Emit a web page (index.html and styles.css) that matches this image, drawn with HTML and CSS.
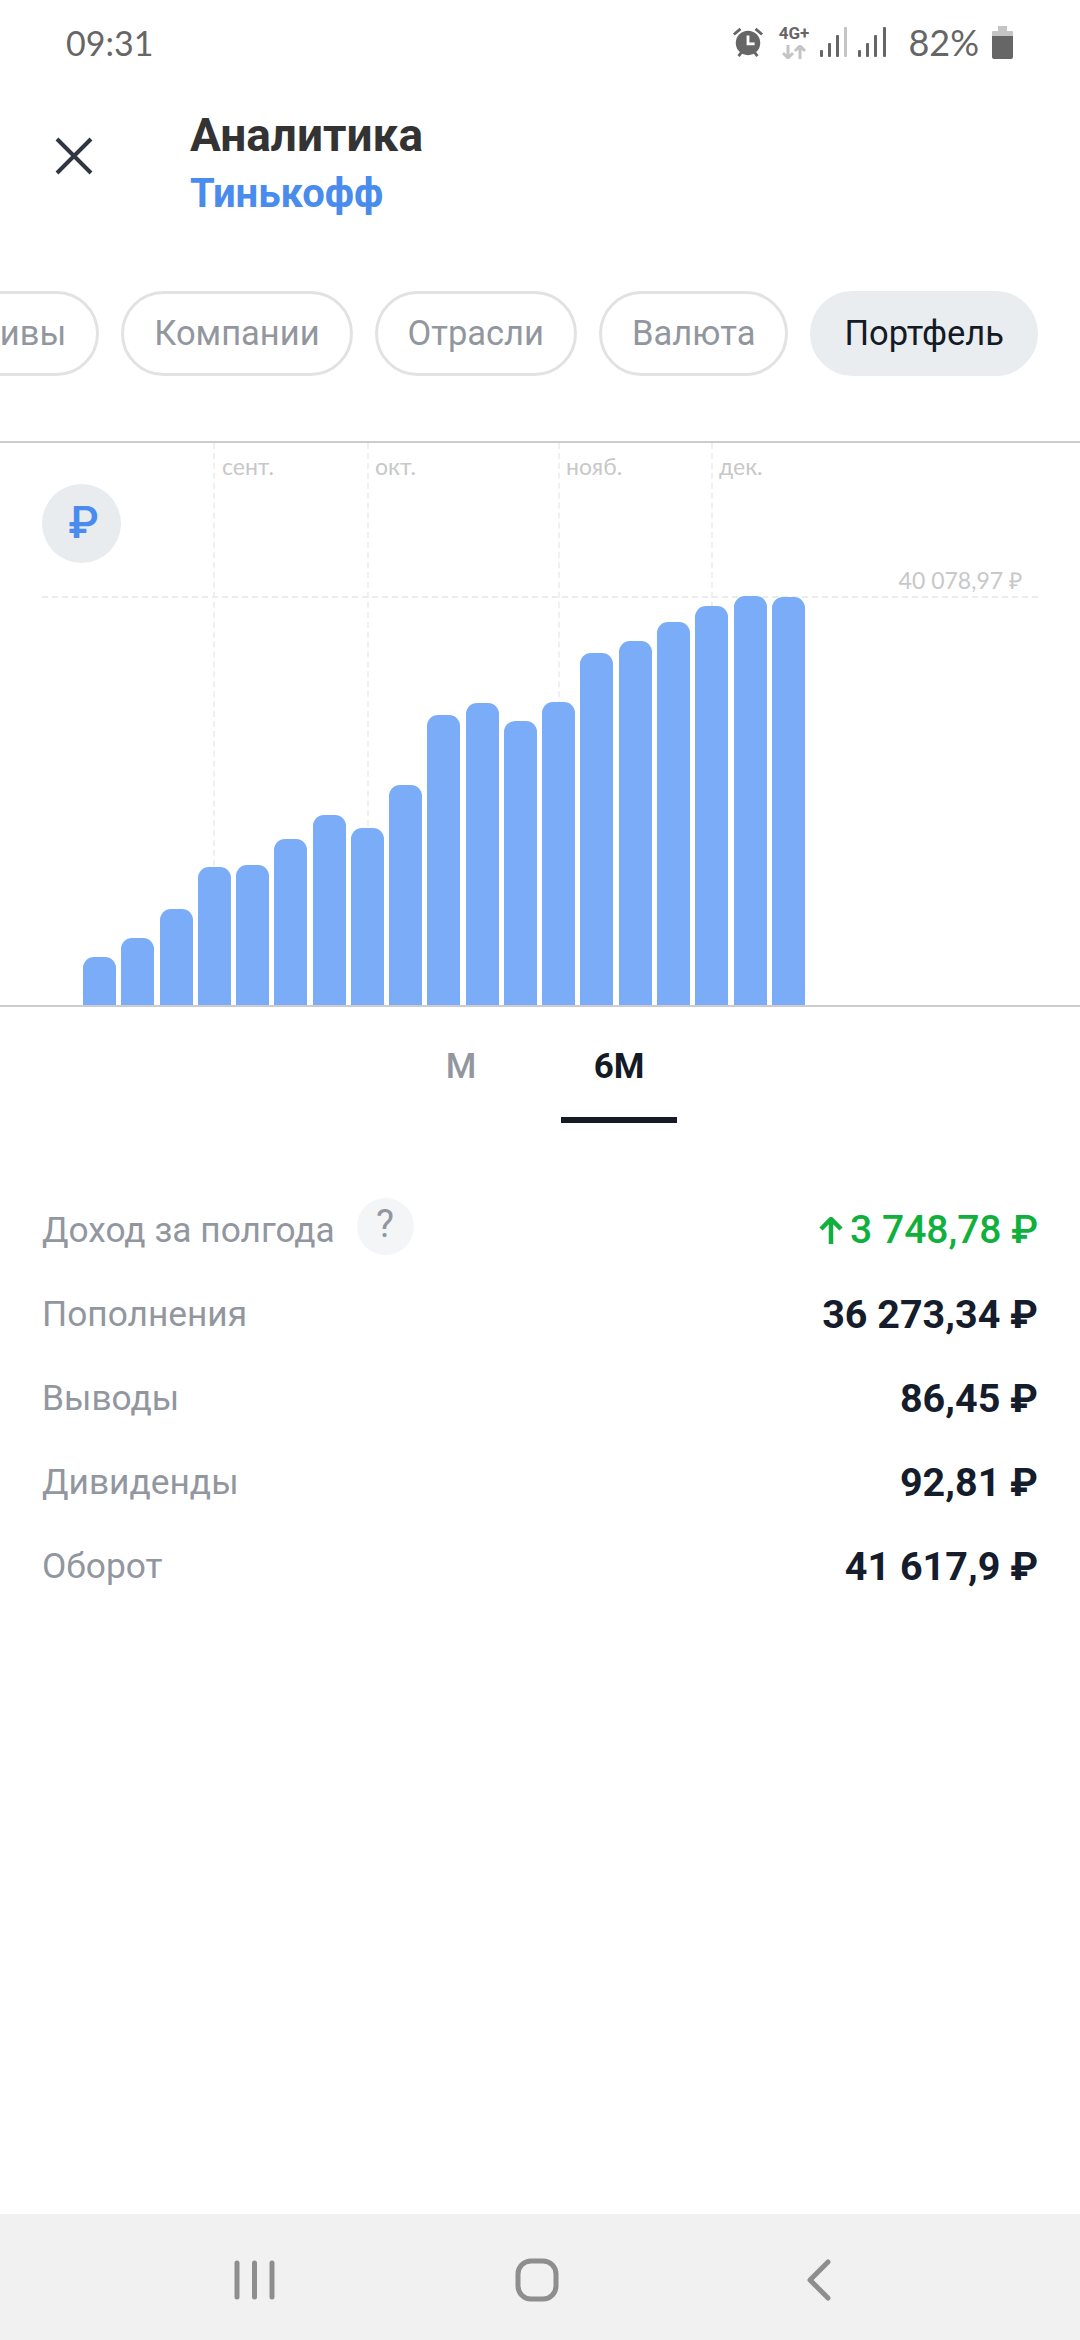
FILE: index.html
```html
<!DOCTYPE html>
<html lang="ru">
<head>
  <meta charset="UTF-8">
  <title>Аналитика</title>
  <link rel="stylesheet" href="styles.css">
</head>
<body>
  <div class="screen">
    <!-- status bar -->
    <div class="status">
      <span class="status-time">09:31</span>
      <div class="status-icons">
        <svg class="ic-alarm" width="32" height="32" viewBox="0 0 34 32">
          <path d="M2 8 L9 2 M32 8 L25 2" stroke="#666" stroke-width="3" fill="none"/>
          <circle cx="17" cy="17" r="13" fill="#666"/>
          <path d="M17 9 V18 H24" stroke="#fff" stroke-width="3" fill="none"/>
          <path d="M7 31 L10 27 M27 31 L24 27" stroke="#666" stroke-width="3" fill="none"/>
        </svg>
        <div class="net">
          <span class="net-label">4G+</span>
          <svg width="24" height="14" viewBox="0 0 24 14">
            <path d="M6 0 V12 M1 8 L6 13 L11 8" stroke="#c4c4c4" stroke-width="3" fill="none"/>
            <path d="M18 14 V2 M13 6 L18 1 L23 6" stroke="#c4c4c4" stroke-width="3" fill="none"/>
          </svg>
        </div>
        <svg class="ic-signal" width="27" height="30" viewBox="0 0 27 30">
          <rect x="0" y="23" width="3" height="7" rx="1" fill="#666"/>
          <rect x="8" y="16" width="3" height="14" rx="1" fill="#666"/>
          <rect x="16" y="8" width="3" height="22" rx="1" fill="#666"/>
          <rect x="24" y="0" width="3" height="30" rx="1" fill="#c4c4c4"/>
        </svg>
        <svg class="ic-signal2" width="28" height="30" viewBox="0 0 28 30">
          <rect x="0" y="23" width="3" height="7" rx="1" fill="#666"/>
          <rect x="8" y="16" width="3" height="14" rx="1" fill="#666"/>
          <rect x="16" y="8" width="3" height="22" rx="1" fill="#666"/>
          <rect x="25" y="0" width="3" height="30" rx="1" fill="#666"/>
        </svg>
        <span class="status-batt">82%</span>
        <svg class="ic-batt" width="21" height="33" viewBox="0 0 21 33">
          <path d="M6 0 H15 V5 H20 Q21 5 21 6 V10 H0 V6 Q0 5 1 5 H6 Z" fill="#c4c4c4"/>
          <path d="M0 10 H21 V31 Q21 33 19 33 H2 Q0 33 0 31 Z" fill="#666"/>
        </svg>
      </div>
    </div>

    <!-- header -->
    <header class="header">
      <svg class="close" width="38" height="38" viewBox="0 0 38 38">
        <path d="M2 2 L36 36 M36 2 L2 36" stroke="#2f3542" stroke-width="4" fill="none"/>
      </svg>
      <div>
        <h1 class="title">Аналитика</h1>
        <div class="subtitle">Тинькофф</div>
      </div>
    </header>

    <!-- chips -->
    <nav class="chips">
      <div class="chip">Активы</div>
      <div class="chip">Компании</div>
      <div class="chip">Отрасли</div>
      <div class="chip">Валюта</div>
      <div class="chip active">Портфель</div>
    </nav>

    <!-- chart -->
    <section class="chart">
      <div class="vline v1"></div>
      <div class="vline v2"></div>
      <div class="vline v3"></div>
      <div class="vline v4"></div>
      <div class="hline"></div>
      <span class="month m1">сент.</span>
      <span class="month m2">окт.</span>
      <span class="month m3">нояб.</span>
      <span class="month m4">дек.</span>
      <span class="max-value">40 078,97 ₽</span>
      <div class="currency">₽</div>
      <div class="bars">
        <div class="bar" style="height:48px"></div>
        <div class="bar" style="height:67px"></div>
        <div class="bar" style="height:96px"></div>
        <div class="bar" style="height:138px"></div>
        <div class="bar" style="height:140px"></div>
        <div class="bar" style="height:166px"></div>
        <div class="bar" style="height:190px"></div>
        <div class="bar" style="height:177px"></div>
        <div class="bar" style="height:220px"></div>
        <div class="bar" style="height:290px"></div>
        <div class="bar" style="height:302px"></div>
        <div class="bar" style="height:284px"></div>
        <div class="bar" style="height:303px"></div>
        <div class="bar" style="height:352px"></div>
        <div class="bar" style="height:364px"></div>
        <div class="bar" style="height:383px"></div>
        <div class="bar" style="height:399px"></div>
        <div class="bar" style="height:409px"></div>
        <div class="bar" style="height:408px"></div>
      </div>
    </section>

    <!-- period tabs -->
    <div class="tabs">
      <div class="tab">М</div>
      <div class="tab active">6М</div>
    </div>

    <!-- totals -->
    <section class="stats">
      <div class="row">
        <div class="row-label">Доход за полгода <span class="help">?</span></div>
        <div class="row-value profit">
          <svg class="arrow" width="24" height="27" viewBox="0 0 24 27">
            <path d="M12 27 V3 M2 12 L12 2 L22 12" stroke="#10b03c" stroke-width="4.5" fill="none"/>
          </svg>
          <span>3 748,78 ₽</span>
        </div>
      </div>
      <div class="row">
        <div class="row-label">Пополнения</div>
        <div class="row-value">36 273,34 ₽</div>
      </div>
      <div class="row">
        <div class="row-label">Выводы</div>
        <div class="row-value">86,45 ₽</div>
      </div>
      <div class="row">
        <div class="row-label">Дивиденды</div>
        <div class="row-value">92,81 ₽</div>
      </div>
      <div class="row">
        <div class="row-label">Оборот</div>
        <div class="row-value">41 617,9 ₽</div>
      </div>
    </section>

    <!-- android nav -->
    <footer class="navbar">
      <svg width="41" height="44" viewBox="0 0 41 44">
        <path d="M3 5 V39 M20.5 5 V39 M38 5 V39" stroke="#8e8e8e" stroke-width="5" stroke-linecap="round" fill="none"/>
      </svg>
      <svg class="nav-home" width="44" height="44" viewBox="0 0 44 44">
        <rect x="3" y="3" width="38" height="38" rx="13" stroke="#8e8e8e" stroke-width="5" fill="none"/>
      </svg>
      <svg class="nav-back" width="26" height="42" viewBox="0 0 26 42">
        <path d="M23 3 L5 21 L23 39" stroke="#8e8e8e" stroke-width="5" stroke-linecap="round" stroke-linejoin="round" fill="none"/>
      </svg>
    </footer>
  </div>
</body>
</html>
```

FILE: styles.css
```css
/* layout */
body { margin: 0; font-family: Roboto, "Noto Sans", Arial, sans-serif; background: #fff; }
.screen { width: 1080px; height: 2340px; display: flex; flex-direction: column; overflow: hidden; }

/* status bar */
.status {
  height: 84px;
  flex-shrink: 0;
  display: flex;
  justify-content: space-between;
  align-items: center;
  padding: 0 67px 0 66px;
  box-sizing: border-box;
  color: #666;
  font-family: Lato, sans-serif;
}
.status-time { font-size: 34px; }
.status-icons { display: flex; align-items: center; }
.net { display: flex; flex-direction: column; align-items: center; margin-left: 15px; }
.net-label { font-family: Roboto, sans-serif; font-weight: 700; font-size: 17px; line-height: 17px; margin-bottom: 3px; }
.ic-signal { margin-left: 11px; }
.ic-signal2 { margin-left: 11px; }
.status-batt { font-size: 36px; margin-left: 22px; }
.ic-batt { margin-left: 13px; }

/* header */
.header { height: 138px; flex-shrink: 0; display: flex; align-items: flex-start; box-sizing: border-box; }
.close { margin: 53px 0 0 55px; }
.title { margin: 23px 0 0 97px; font-size: 46px; line-height: 56px; font-weight: 700; color: #333; }
.subtitle { margin: 3px 0 0 97px; font-size: 40px; line-height: 56px; font-weight: 700; color: #4a8bee; }

/* chips */
.chips {
  display: flex;
  justify-content: flex-end;
  gap: 22px;
  margin-top: 69px;
  padding-right: 42px;
  overflow: hidden;
  flex-shrink: 0;
}
.chip {
  flex-shrink: 0;
  height: 85px;
  line-height: 79px;
  padding: 0 30px;
  border: 3px solid #e0e2e4;
  border-radius: 43px;
  box-sizing: border-box;
  font-size: 34.5px;
  color: #92979f;
}
.chip.active { padding: 0 31px; background: #e9edef; border-color: #e9edef; color: #141a26; }

/* chart */
.chart {
  position: relative;
  height: 566px;
  margin-top: 65px;
  flex-shrink: 0;
  box-sizing: border-box;
  border-top: 2px solid #ccc;
  border-bottom: 2px solid #ccc;
}
.bars { position: absolute; left: 83px; bottom: 0; display: flex; align-items: flex-end; gap: 5.28px; }
.bar { width: 33px; background: #7aacf8; border-radius: 11px 11px 0 0; }
.vline { position: absolute; top: 0; bottom: 0; width: 0; border-left: 2px dashed #f0f0f0; }
.v1 { left: 213px; }
.v2 { left: 367px; }
.v3 { left: 558px; }
.v4 { left: 711px; }
.hline { position: absolute; left: 42px; width: 996px; top: 153px; border-top: 2px dashed #ececec; }
.month { position: absolute; top: 9px; font-family: Lato, sans-serif; font-size: 23px; color: #c8c8c8; }
.m1 { left: 222px; }
.m2 { left: 375px; }
.m3 { left: 566px; }
.m4 { left: 719px; }
.max-value { position: absolute; right: 58px; top: 121px; font-family: Lato, sans-serif; font-size: 23px; color: #c8c8c8; }
.currency {
  position: absolute;
  left: 42px;
  top: 41px;
  width: 79px;
  height: 79px;
  box-sizing: border-box;
  padding-left: 4px;
  border-radius: 50%;
  background: #e9ecee;
  color: #4a8bee;
  font-size: 44px;
  font-weight: 500;
  line-height: 79px;
  text-align: center;
}

/* period tabs */
.tabs { display: flex; justify-content: center; gap: 42px; flex-shrink: 0; }
.tab {
  width: 116px;
  height: 116px;
  box-sizing: border-box;
  padding-top: 38px;
  line-height: 44px;
  text-align: center;
  font-size: 35px;
  font-weight: 500;
  color: #92979f;
}
.tab.active { font-weight: 700; color: #141a26; border-bottom: 6px solid #141a26; }

/* totals */
.stats { margin-top: 65px; padding: 0 42px; flex-shrink: 0; }
.row { height: 84px; display: flex; justify-content: space-between; align-items: center; }
.row-label { display: flex; align-items: center; font-size: 35.3px; color: #92979f; white-space: pre; }
.help {
  width: 57px;
  height: 57px;
  margin: -8px 0 0 13px;
  border-radius: 50%;
  background: #f4f5f7;
  text-align: center;
  line-height: 53px;
  font-size: 38px;
}
.row-value { display: flex; align-items: center; font-size: 39.5px; font-weight: 700; color: #151c2b; }
.row-value.profit { font-size: 39px; font-weight: 500; color: #10b03c; }
.arrow { margin-right: 7px; }

/* android nav */
.navbar {
  margin-top: auto;
  height: 126px;
  flex-shrink: 0;
  background: #f1f1f1;
  display: flex;
  align-items: center;
  padding: 6px 0 0 234px;
  box-sizing: border-box;
}
.nav-home { margin-left: 240px; }
.nav-back { margin-left: 246px; }
```
